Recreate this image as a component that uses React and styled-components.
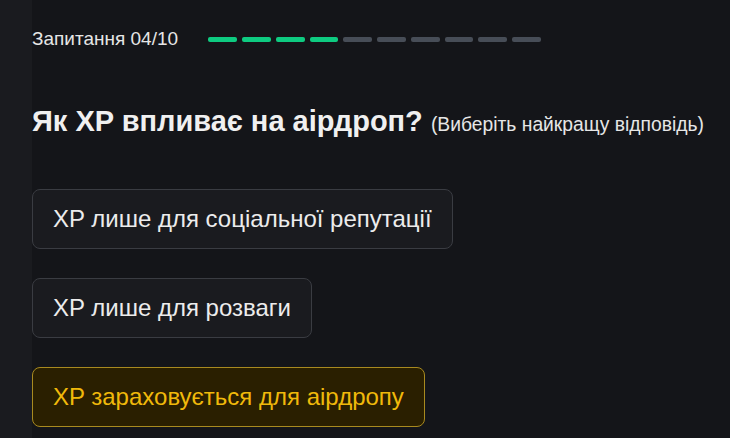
import React from "react"
import styled, { createGlobalStyle } from "styled-components"

const options = [
    { text: "XP лише для соціальної репутації", selected: false },
    { text: "XP лише для розваги", selected: false },
    { text: "XP зараховується для аірдропу", selected: true },
]

const TOTAL = 10
const CURRENT = 4

function App() {
    return (
        <Page>
            <GlobalStyle />
            <SideStrip />
            <Main>
                <Header>
                    <Counter>Запитання 04/10</Counter>
                    <Progress>
                        {Array.from({ length: TOTAL }).map((_, i) => (
                            <Segment key={i} done={i < CURRENT} />
                        ))}
                    </Progress>
                </Header>
                <Question>
                    Як XP впливає на аірдроп? <Hint>(Виберіть найкращу відповідь)</Hint>
                </Question>
                <Options>
                    {options.map((option, index) => (
                        <Option key={index} selected={option.selected}>
                            {option.text}
                        </Option>
                    ))}
                </Options>
            </Main>
        </Page>
    )
}

export default App;

const GlobalStyle = createGlobalStyle`
    body {
        margin: 0;
        background-color: #141519;
        font-family: "Liberation Sans", Arial, sans-serif;
    }
`
const Page = styled.div`
    display: flex;
    width: 730px;
    height: 438px;
    overflow: hidden;
    background-color: #141519;
`
const SideStrip = styled.div`
    width: 32px;
    flex-shrink: 0;
    background-color: #1a1b1f;
`
const Main = styled.main`
    flex: 1;
    display: flex;
    flex-direction: column;
    padding-top: 28px;
`
const Header = styled.div`
    display: flex;
    align-items: center;
    gap: 30px;
`
const Counter = styled.span`
    color: #e6e6e6;
    font-size: 19px;
    line-height: 22px;
`
const Progress = styled.div`
    display: flex;
    gap: 5px;
    width: 333px;
`
const Segment = styled.div`
    flex: 1;
    height: 5px;
    border-radius: 2px;
    background-color: ${props => props.done ? "#0ecb81" : "#474d57"};
`
const Question = styled.h1`
    margin: 54px 0 0 0;
    color: #f0f0f0;
    font-size: 29px;
    font-weight: bold;
    line-height: 34px;
    white-space: nowrap;
`
const Hint = styled.span`
    color: #e6e6e6;
    font-size: 19.3px;
    font-weight: normal;
`
const Options = styled.div`
    display: flex;
    flex-direction: column;
    align-items: flex-start;
    gap: 29px;
    margin-top: 47px;
`
const Option = styled.button`
    height: 60px;
    padding: 0 20px;
    border-radius: 8px;
    font-family: inherit;
    font-size: 24px;
    cursor: pointer;
    border: 1px solid ${props => props.selected ? "#a88a1f" : "#3a3c42"};
    background-color: ${props => props.selected ? "#2a1f00" : "#1a1b1f"};
    color: ${props => props.selected ? "#f0b90b" : "#ececec"};
`
